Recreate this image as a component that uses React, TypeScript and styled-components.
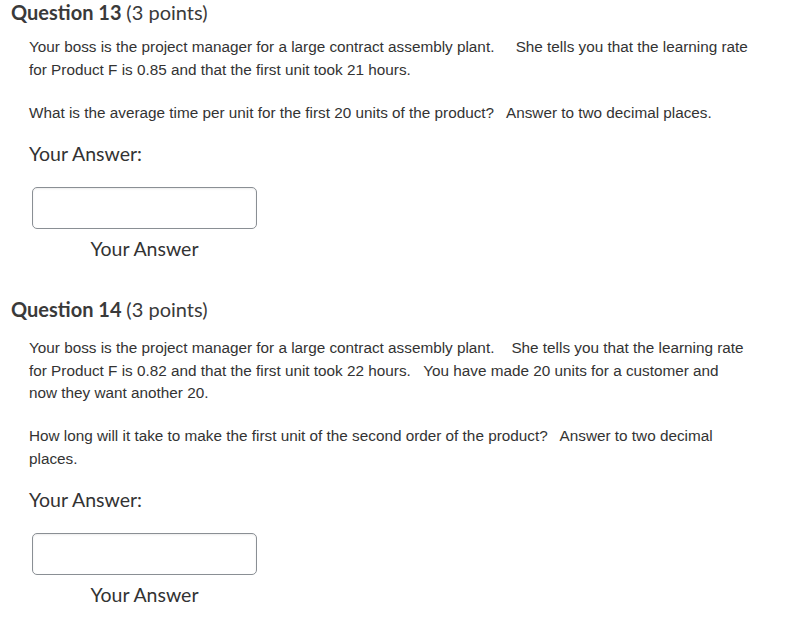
import React from "react";
import styled, { createGlobalStyle } from "styled-components";

const GlobalStyle = createGlobalStyle`
  html, body {
    margin: 0;
    padding: 0;
    background: #ffffff;
  }
  body {
    font-family: "Liberation Sans", Arial, sans-serif;
    color: #333333;
  }
`;

const Page = styled.div`
  display: flex;
  flex-direction: column;
  padding: 0 0 0 11px;
  width: 806px;
  box-sizing: border-box;
`;

const QuestionBlock = styled.section<{ $first?: boolean }>`
  display: flex;
  flex-direction: column;
  margin-top: ${(p) => (p.$first ? "0" : "36px")};
`;

const Heading = styled.h2`
  margin: 0;
  font-family: Lato, "Open Sans", sans-serif;
  font-size: 20px;
  line-height: 24px;
  font-weight: 700;
  color: #3a3a3a;
  white-space: nowrap;
`;

const Points = styled.span`
  font-weight: 400;
`;

const Content = styled.div<{ $first?: boolean }>`
  display: flex;
  flex-direction: column;
  padding-left: 18px;
  margin-top: ${(p) => (p.$first ? "12px" : "16px")};
`;

const Paragraph = styled.p<{ $gap?: boolean }>`
  margin: ${(p) => (p.$gap ? "20.5px 0 0" : "0")};
  font-family: "Liberation Sans", Arial, sans-serif;
  font-size: 15.3px;
  line-height: 22.5px;
  color: #333333;
  white-space: pre;
`;

const AnswerLabel = styled.div`
  margin-top: 19px;
  font-family: Lato, "Open Sans", sans-serif;
  font-size: 19.5px;
  line-height: 22px;
  color: #333333;
`;

const AnswerField = styled.div`
  display: flex;
  flex-direction: column;
  align-items: center;
  width: 225px;
  margin: 22px 0 0 3px;
`;

const AnswerInput = styled.input`
  width: 225px;
  height: 42px;
  box-sizing: border-box;
  border: 1px solid #8a8f94;
  border-radius: 5px;
  background: #ffffff;
  box-shadow: inset 0 1px 2px rgba(0, 0, 0, 0.08);
  outline: none;
  padding: 0 8px;
  font-size: 14px;
`;

const FieldCaption = styled.div`
  margin-top: 8px;
  font-family: Lato, "Open Sans", sans-serif;
  font-size: 19.5px;
  line-height: 24px;
  color: #333333;
`;

type Question = {
  number: number;
  points: number;
  paragraphs: string[];
};

const NB = "\u00a0";

const questions: Question[] = [
  {
    number: 13,
    points: 3,
    paragraphs: [
      `Your boss is the project manager for a large contract assembly plant.${NB}${NB}${NB}${NB} She tells you that the learning rate\nfor Product F is 0.85 and that the first unit took 21 hours.`,
      `What is the average time per unit for the first 20 units of the product?${NB}${NB} Answer to two decimal places.`,
    ],
  },
  {
    number: 14,
    points: 3,
    paragraphs: [
      `Your boss is the project manager for a large contract assembly plant.${NB}${NB}${NB} She tells you that the learning rate\nfor Product F is 0.82 and that the first unit took 22 hours.${NB}${NB} You have made 20 units for a customer and\nnow they want another 20.`,
      `How long will it take to make the first unit of the second order of the product?${NB}${NB} Answer to two decimal\nplaces.`,
    ],
  },
];

export default function App() {
  return (
    <>
      <GlobalStyle />
      <Page>
        {questions.map((q, i) => (
          <QuestionBlock key={q.number} $first={i === 0}>
            <Heading>
              Question {q.number} <Points>({q.points} points)</Points>
            </Heading>
            <Content $first={i === 0}>
              {q.paragraphs.map((text, j) => (
                <Paragraph key={j} $gap={j > 0}>
                  {text}
                </Paragraph>
              ))}
              <AnswerLabel>Your Answer:</AnswerLabel>
              <AnswerField>
                <AnswerInput type="text" aria-label="Your Answer" />
                <FieldCaption>Your Answer</FieldCaption>
              </AnswerField>
            </Content>
          </QuestionBlock>
        ))}
      </Page>
    </>
  );
}
